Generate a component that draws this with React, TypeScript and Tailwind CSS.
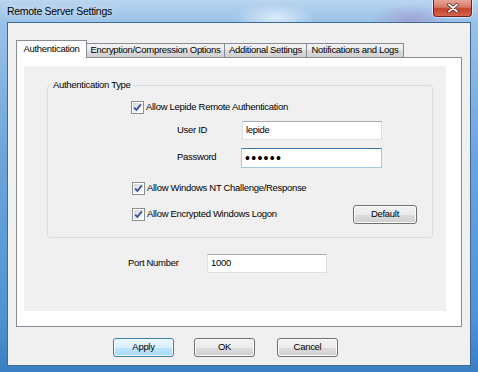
import React from 'react';

const CheckBox = () => (
  <span className="w-[13px] h-[13px] shrink-0 border border-[#8e8f8f] bg-white p-[1px] flex">
    <span className="flex-1 flex items-center justify-center bg-[linear-gradient(135deg,#d2d5da_0%,#f4f4f4_70%,#fdfdfd_100%)]">
      <svg width="9" height="9" viewBox="0 0 9 9">
        <path d="M1.2 4.6 L3.4 7 L7.8 1.4" stroke="#2b4aa0" strokeWidth="1.7" fill="none" />
      </svg>
    </span>
  </span>
);

const Button = ({ label, primary = false, className = '' }: { label: string; primary?: boolean; className?: string }) => (
  <button
    className={
      primary
        ? `h-[19px] rounded-[3px] border border-[#3c7fb1] bg-[linear-gradient(180deg,#eaf6fd_0%,#d9f0fc_50%,#bee6fd_50%,#a7d9f5_100%)] shadow-[inset_0_0_0_1px_#f4fbff] text-black flex items-center justify-center ${className}`
        : `h-[19px] rounded-[3px] border border-[#707070] bg-[linear-gradient(180deg,#f2f2f2_0%,#ebebeb_50%,#dddddd_50%,#cfcfcf_100%)] shadow-[inset_0_0_0_1px_#fcfcfc] text-black flex items-center justify-center ${className}`
    }
  >
    {label}
  </button>
);

const tabs = [
  { label: 'Encryption/Compression Options', w: 'w-[138px]' },
  { label: 'Additional Settings', w: 'w-[82px]' },
  { label: 'Notifications and Logs', w: 'w-[97px]' },
];

export default function App() {
  return (
    <div className="w-[478px] h-[372px] overflow-hidden flex flex-col font-['Liberation_Sans',Arial,sans-serif] text-[9.5px] tracking-[-0.3px] text-black bg-[radial-gradient(ellipse_40px_14px_at_275px_18px,rgba(235,245,255,0.8),transparent),radial-gradient(ellipse_40px_16px_at_410px_20px,rgba(160,140,200,0.6),transparent),linear-gradient(180deg,#b9d5ef_0%,#9ac2e8_6%,#6ea6dc_40%,#4f93d3_85%,#3a7fc2_100%)]">
      {/* title bar */}
      <div className="h-[22px] flex items-start shrink-0">
        <div className="ml-[7px] mt-[5px] text-[10.5px] leading-[12px] [text-shadow:0_0_6px_rgba(255,255,255,0.9)]">
          Remote Server Settings
        </div>
        <div className="ml-auto mr-[6px] w-[39px] h-[17px] rounded-b-[4px] border border-t-0 border-[#6d2420] bg-[linear-gradient(180deg,#e9a597_0%,#d67a68_45%,#c2412f_55%,#d8654e_100%)] shadow-[0_0_0_1px_rgba(255,255,255,0.55)] flex items-center justify-center">
          <svg width="12" height="10" viewBox="0 0 12 10">
            <path d="M2 1.5 L10 8.5 M10 1.5 L2 8.5" stroke="#5a1a14" strokeWidth="3.4" strokeLinecap="round" />
            <path d="M2 1.5 L10 8.5 M10 1.5 L2 8.5" stroke="#ffffff" strokeWidth="2" strokeLinecap="round" />
          </svg>
        </div>
      </div>

      {/* client area */}
      <div className="mx-[7px] h-[344px] shrink-0 border border-[#3f6a91] bg-[#f0f0f0] flex flex-col">
        {/* tabs */}
        <div className="mt-[17px] ml-[8px] h-[17px] flex items-end">
          <div className="relative z-10 -mb-px w-[71px] h-[18px] bg-white border border-b-0 border-[#898c95] flex items-center justify-center pb-[1px]">
            Authentication
          </div>
          {tabs.map((t) => (
            <div
              key={t.label}
              className={`${t.w} h-[14px] border border-b-0 border-l-0 border-[#898c95] bg-[linear-gradient(180deg,#f2f2f2_0%,#ebebeb_50%,#dddddd_50%,#cfcfcf_100%)] flex items-center justify-center`}
            >
              {t.label}
            </div>
          ))}
        </div>

        {/* tab panel */}
        <div className="ml-[8px] w-[446px] h-[270px] border border-[#898c95] bg-white">
          <div className="ml-[7px] mt-[8px] w-[422px] h-[245px] bg-[#f0f0f0] flex flex-col">
            <fieldset className="ml-[23px] mt-[13px] w-[386px] border border-[#d5dfe5] rounded-[3px] pb-[14px]">
              <legend className="ml-[3px] px-[2px] leading-[12px]">Authentication Type</legend>

              <div className="mt-[9px] h-[14px] pl-[83px] flex items-center gap-[2px]">
                <CheckBox />
                <span>Allow Lepide Remote Authentication</span>
              </div>

              <div className="mt-[7px] h-[19px] pl-[129px] flex items-center">
                <span className="w-[65px]">User ID</span>
                <div className="w-[140px] h-[19px] bg-white border border-[#dbdfe6] border-t-[#abadb3] flex items-center px-[3px]">
                  lepide
                </div>
              </div>

              <div className="mt-[8px] h-[19px] pl-[129px] flex items-center">
                <span className="w-[64px]">Password</span>
                <div className="w-[141px] h-[20px] bg-white border border-[#a4c9e3] border-t-[#3d7bad] flex items-center px-[3px] text-[14px] leading-[14px] tracking-[1.3px]">
                  ••••••
                </div>
              </div>

              <div className="mt-[14px] h-[14px] pl-[84px] flex items-center gap-[2px]">
                <CheckBox />
                <span>Allow Windows NT Challenge/Response</span>
              </div>

              <div className="mt-[11px] h-[17px] pl-[84px] pr-[15px] flex items-center">
                <div className="flex items-center gap-[2px]">
                  <CheckBox />
                  <span>Allow Encrypted Windows Logon</span>
                </div>
                <Button label="Default" className="ml-auto w-[64px] h-[18px]" />
              </div>
            </fieldset>

            <div className="mt-[16px] h-[19px] pl-[104px] flex items-center">
              <span className="w-[79px]">Port Number</span>
              <div className="w-[120px] h-[19px] bg-white border border-[#dbdfe6] border-t-[#abadb3] flex items-center px-[3px]">
                1000
              </div>
            </div>
          </div>
        </div>

        {/* buttons */}
        <div className="mt-[11px] pl-[105px] flex items-center">
          <Button label="Apply" primary className="w-[61px]" />
          <Button label="OK" className="ml-[20px] w-[61px]" />
          <Button label="Cancel" className="ml-[22px] w-[61px]" />
        </div>
      </div>
    </div>
  );
}
